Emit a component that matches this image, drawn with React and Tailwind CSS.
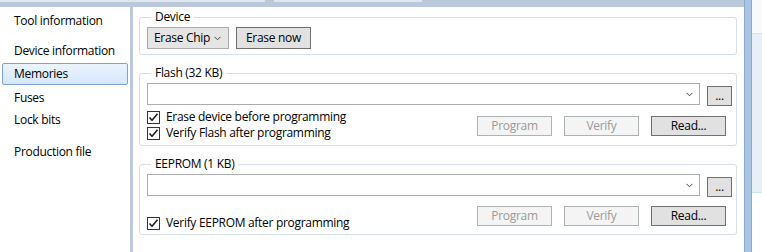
import React from "react";

function Check({ label }) {
  return (
    <div className="flex items-center h-[16px] leading-[16px]">
      <span className="w-[13px] h-[13px] border border-[#333333] bg-white flex items-center justify-center">
        <svg width="11" height="11" viewBox="0 0 11 11">
          <path d="M1.5 5.5 L4 8.2 L9.5 1.8" fill="none" stroke="#222" strokeWidth="1.6" />
        </svg>
      </span>
      <span className="ml-[6px]">{label}</span>
    </div>
  );
}

function Btn({ children, disabled, className = "" }) {
  return (
    <div
      className={
        "w-[75px] h-[20px] flex items-center justify-center border " +
        (disabled
          ? "bg-[#f4f4f4] border-[#adb2b5] text-[#9a9a9a] "
          : "bg-[#e1e1e1] border-[#707070] text-black ") +
        className
      }
    >
      {children}
    </div>
  );
}

function FileRow() {
  return (
    <div className="flex items-start">
      <div className="flex-1 h-[22px] border border-[#abadb3] bg-white flex items-center justify-end pr-[6px]">
        <svg width="7" height="5" viewBox="0 0 7 5">
          <path d="M0.5 0.8 L3.5 3.8 L6.5 0.8" fill="none" stroke="#444" strokeWidth="1" />
        </svg>
      </div>
      <div className="ml-[7px] mt-[3px] w-[25px] h-[20px] border border-[#707070] bg-[#e1e1e1] flex items-end justify-center pb-[3px] leading-none">
        ...
      </div>
    </div>
  );
}

function Group({ title, className = "", children }) {
  return (
    <fieldset className={"border border-[#d5dfe5] rounded-[3px] pl-[7px] pr-[4px] " + className}>
      <legend className="ml-[4px] px-[4px] leading-[16px]">{title}</legend>
      {children}
    </fieldset>
  );
}

export default function App() {
  const nav = [
    ["Tool information", "mt-[3px]"],
    ["Device information", "mt-[8px]"],
    ["Memories", "mt-[1px]", true],
    ["Fuses", "mt-[2px]"],
    ["Lock bits", "mt-0"],
    ["Production file", "mt-[10px]"],
  ];
  return (
    <div
      className="w-[762px] h-[252px] flex bg-white text-[12px] tracking-[-0.3px] text-black overflow-hidden"
      style={{ fontFamily: "'Open Sans', 'Noto Sans', sans-serif" }}
    >
      <div className="w-[744px] flex flex-col">
        <div className="h-[7px] bg-[#bac8da] flex items-start">
          <div className="w-[265px] h-[2px] bg-[#dfe6ef]" />
          <div className="ml-[9px] w-[148px] h-[2px] bg-[#dfe6ef]" />
        </div>
        <div className="flex flex-1">
          <div className="w-[130px] flex flex-col px-[2px]">
            {nav.map(([t, m, sel]) => (
              <div
                key={t}
                className={
                  "h-[22px] flex items-center pl-[11px] border rounded-[2px] " +
                  m +
                  (sel
                    ? " border-[#7da2ce] bg-gradient-to-b from-[#ebf4fd] to-[#d6e7fb]"
                    : " border-transparent")
                }
              >
                {t}
              </div>
            ))}
          </div>
          <div className="w-[3px] bg-[#bac8da]" />
          <div className="flex-1 pl-[6px] pr-[7px] flex flex-col">
            <Group title="Device" className="mt-[2px] pb-[5px]">
              <div className="flex mt-[2px]">
                <div className="w-[82px] h-[22px] border border-[#acacac] bg-[#e5e5e5] flex items-center pl-[6px] pr-[7px] justify-between">
                  <span>Erase Chip</span>
                  <svg width="7" height="5" viewBox="0 0 7 5">
                    <path d="M0.5 0.8 L3.5 3.8 L6.5 0.8" fill="none" stroke="#444" strokeWidth="1" />
                  </svg>
                </div>
                <div className="ml-[7px] w-[75px] h-[22px] border border-[#707070] bg-[#e1e1e1] flex items-center justify-center">
                  Erase now
                </div>
              </div>
            </Group>
            <Group title="Flash (32 KB)" className="mt-[10px] pb-[4px]">
              <div className="mt-[2px]">
                <FileRow />
              </div>
              <div className="flex justify-between items-start">
                <div className="mt-[3px]">
                  <Check label="Erase device before programming" />
                  <Check label="Verify Flash after programming" />
                </div>
                <div className="flex mt-[10px] mr-[6px] gap-[12px]">
                  <Btn disabled>Program</Btn>
                  <Btn disabled>Verify</Btn>
                  <Btn>Read...</Btn>
                </div>
              </div>
            </Group>
            <Group title="EEPROM (1 KB)" className="mt-[10px] pb-[3px]">
              <div className="mt-[2px]">
                <FileRow />
              </div>
              <div className="flex justify-between items-start">
                <div className="mt-[18px]">
                  <Check label="Verify EEPROM after programming" />
                </div>
                <div className="flex mt-[9px] mr-[6px] gap-[12px]">
                  <Btn disabled>Program</Btn>
                  <Btn disabled>Verify</Btn>
                  <Btn>Read...</Btn>
                </div>
              </div>
            </Group>
          </div>
        </div>
      </div>
      <div className="w-[8px] bg-[#a9c5e4] border-x border-[#8eaacb]" />
      <div className="flex-1 flex flex-col">
        <div className="h-[33px] bg-[#f9f9f9]" />
        <div className="h-[160px] bg-[#e9eff6] border-y border-[#d3e2f0]" />
        <div className="flex-1 bg-white" />
      </div>
    </div>
  );
}
